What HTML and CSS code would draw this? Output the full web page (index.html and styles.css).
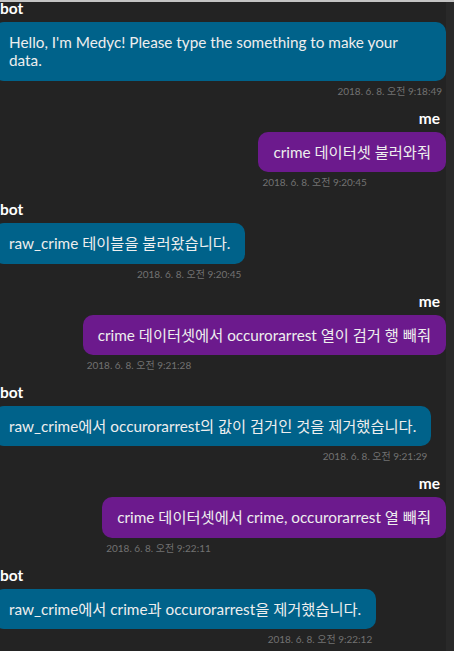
FILE: index.html
```html
<!DOCTYPE html>
<html lang="ko">
<head>
<meta charset="utf-8">
<title>Medyc chat</title>
<link rel="stylesheet" href="styles.css">
</head>
<body>
<div class="page">
  <div class="chat">
    <div class="msg bot">
      <div class="name">bot</div>
      <div class="body">
        <div class="bubble">Hello, I'm Medyc! Please type the something to make your data.</div>
        <div class="time">2018. 6. 8. 오전 9:18:49</div>
      </div>
    </div>
    <div class="msg me">
      <div class="name">me</div>
      <div class="body">
        <div class="bubble">crime 데이터셋 불러와줘</div>
        <div class="time">2018. 6. 8. 오전 9:20:45</div>
      </div>
    </div>
    <div class="msg bot">
      <div class="name">bot</div>
      <div class="body">
        <div class="bubble">raw_crime 테이블을 불러왔습니다.</div>
        <div class="time">2018. 6. 8. 오전 9:20:45</div>
      </div>
    </div>
    <div class="msg me">
      <div class="name">me</div>
      <div class="body">
        <div class="bubble">crime 데이터셋에서 occurorarrest 열이 검거 행 빼줘</div>
        <div class="time">2018. 6. 8. 오전 9:21:28</div>
      </div>
    </div>
    <div class="msg bot">
      <div class="name">bot</div>
      <div class="body">
        <div class="bubble">raw_crime에서 occurorarrest의 값이 검거인 것을 제거했습니다.</div>
        <div class="time">2018. 6. 8. 오전 9:21:29</div>
      </div>
    </div>
    <div class="msg me">
      <div class="name">me</div>
      <div class="body">
        <div class="bubble">crime 데이터셋에서 crime, occurorarrest 열 빼줘</div>
        <div class="time">2018. 6. 8. 오전 9:22:11</div>
      </div>
    </div>
    <div class="msg bot">
      <div class="name">bot</div>
      <div class="body">
        <div class="bubble">raw_crime에서 crime과 occurorarrest을 제거했습니다.</div>
        <div class="time">2018. 6. 8. 오전 9:22:12</div>
      </div>
    </div>
  </div>
  <div class="scrollbar"></div>
</div>
</body>
</html>
```

FILE: styles.css
```css
html, body {
  margin: 0;
  padding: 0;
  height: 100%;
  background: #232323;
  overflow: hidden;
}

body {
  font-family: "Lato", "Noto Sans CJK KR", sans-serif;
  color: #f2f2f2;
}

.page {
  display: flex;
  height: 100%;
  border-top: 2px solid #c4c4c4;
  box-sizing: border-box;
}

.chat {
  flex: 1;
  display: flex;
  flex-direction: column;
  margin-left: -6px;
  margin-top: -3px;
}

.scrollbar {
  width: 8px;
  background: #292929;
}

.msg {
  display: flex;
  flex-direction: column;
  margin-bottom: 12px;
}

.msg.bot {
  align-items: flex-start;
}

.msg.me {
  align-items: flex-end;
}

.name {
  font-weight: 700;
  font-size: 15.5px;
  line-height: 19px;
  color: #ffffff;
  padding: 0 6px;
  margin-bottom: 4px;
}

.body {
  display: flex;
  flex-direction: column;
  max-width: 100%;
}

.bot .body {
  align-items: flex-end;
}

.me .body {
  align-items: flex-start;
}

.bubble {
  font-size: 15.3px;
  line-height: 18.4px;
  padding: 11px 15px;
  border-radius: 10px;
  color: #eeeeee;
}

.bot .bubble {
  background: #00628a;
}

.me .bubble {
  background: #6c1a8d;
}

.time {
  font-size: 10px;
  line-height: 12px;
  color: #727272;
  margin-top: 4px;
  padding: 0 4px;
}
```
